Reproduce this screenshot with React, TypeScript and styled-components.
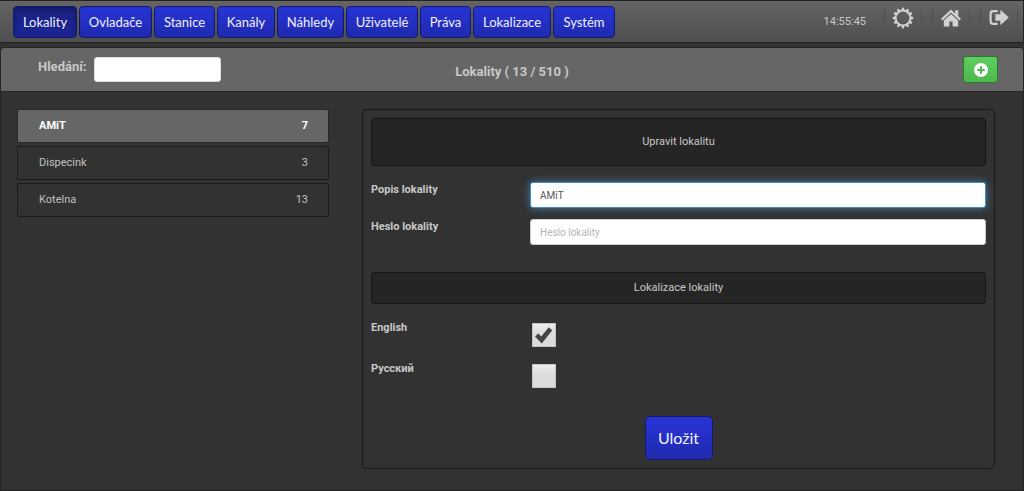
import React, { useState } from "react";
import styled, { createGlobalStyle } from "styled-components";

const BODY_FONT = `Roboto, "Noto Sans", sans-serif`;
const NAV_FONT = `Lato, "Open Sans", sans-serif`;

const GlobalStyle = createGlobalStyle`
  * { box-sizing: border-box; }
  body {
    margin: 0;
    background: #323232;
    color: #c8c8c8;
    font: 11px/16px ${BODY_FONT};
  }
  button, input { font: inherit; margin: 0; }
`;

const Page = styled.div`
  min-height: 100vh;
  display: flex;
  flex-direction: column;
`;

const Header = styled.header`
  height: 43px;
  flex: none;
  display: flex;
  align-items: center;
  justify-content: space-between;
  padding: 0 0 0 13px;
  background: linear-gradient(#646464, #4f4f4f);
  border: solid #222;
  border-width: 1px 1px 1px 0;
`;

const Nav = styled.nav`
  display: flex;
  gap: 2px;
`;

const NavButton = styled.button<{ $width: number; $active?: boolean }>`
  width: ${(p) => p.$width}px;
  height: 32px;
  padding: 0;
  border: 1px solid #141a6a;
  border-radius: 4px;
  background: ${(p) =>
    p.$active ? "linear-gradient(#1a2080, #1c2596)" : "linear-gradient(#2834d6, #1f2aae)"};
  box-shadow: ${(p) => (p.$active ? "inset 0 2px 4px rgba(0, 0, 0, 0.25)" : "none")};
  color: #f0f0ff;
  font: 13px/20px ${NAV_FONT};
  cursor: pointer;
`;

const Tools = styled.div`
  display: flex;
  align-items: center;
`;

const Clock = styled.time`
  margin-right: 13px;
  font-size: 11px;
`;

const IconButton = styled.button`
  width: 48px;
  height: 32px;
  padding: 0 0 8px;
  display: flex;
  justify-content: center;
  align-items: center;
  border: 0;
  background: none;
  color: #d2d2d2;
  cursor: pointer;
`;

const IconFrame = styled.span`
  width: 38px;
  height: 18px;
  display: flex;
  justify-content: center;
  align-items: center;
  border: solid #4e4e4e;
  border-width: 0 1px;
`;

const Toolbar = styled.section`
  height: 45px;
  flex: none;
  margin: 4px 0 0;
  padding: 0 25px;
  display: grid;
  grid-template-columns: 1fr auto 1fr;
  align-items: center;
  background: #666;
  border: 1px solid #262626;
  border-radius: 4px 4px 0 0;
`;

const Search = styled.label`
  display: flex;
  gap: 8px;
  padding-left: 12px;
  font-weight: 700;
  font-size: 13px;
  line-height: 20px;
`;

const SearchInput = styled.input`
  width: 127px;
  height: 25px;
  padding: 0 8px;
  border: 1px solid #ddd;
  border-radius: 3px;
  background: #fff;
`;

const Title = styled.h1`
  margin: 0;
  padding-top: 4px;
  font-size: 13px;
  line-height: 16px;
  font-weight: 700;
`;

const AddButton = styled.button`
  width: 35px;
  height: 27px;
  padding: 0;
  justify-self: end;
  display: flex;
  align-items: center;
  justify-content: center;
  border: 1px solid #2b7a2b;
  border-radius: 3px;
  background: linear-gradient(#5fce5f, #4cb84c);
  color: #fff;
  cursor: pointer;
`;

const Main = styled.main`
  flex: 1;
  display: grid;
  grid-template-columns: minmax(0, 312fr) minmax(0, 633fr);
  column-gap: 33px;
  align-items: start;
  padding: 17px 28px 21px 16px;
  border: solid #222;
  border-width: 0 1px 1px;
`;

const List = styled.ul`
  margin: 0;
  padding: 0;
  list-style: none;
  display: flex;
  flex-direction: column;
  gap: 3px;
`;

const ListButton = styled.button<{ $active?: boolean }>`
  width: 100%;
  height: 34px;
  padding: 0 20px 0 21px;
  display: flex;
  align-items: center;
  justify-content: space-between;
  border: 1px solid ${(p) => (p.$active ? "#282828" : "#1b1b1b")};
  border-radius: 2px;
  background: ${(p) => (p.$active ? "#666" : "transparent")};
  color: ${(p) => (p.$active ? "#fff" : "#c0c0c0")};
  font-weight: ${(p) => (p.$active ? 700 : 400)};
  cursor: pointer;
`;

const Panel = styled.form`
  min-height: 360px;
  padding: 8px;
  border: 1px solid #1a1a1a;
  border-radius: 4px;
`;

const Banner = styled.h2<{ $tall?: boolean }>`
  height: ${(p) => (p.$tall ? 48 : 32)}px;
  margin: 0;
  display: flex;
  align-items: center;
  justify-content: center;
  background: #252525;
  border: 1px solid #161616;
  border-radius: 3px;
  font-size: 11px;
  font-weight: 400;
`;

const Fields = styled.div<{ $gap: number }>`
  display: flex;
  flex-direction: column;
  gap: ${(p) => p.$gap}px;
  padding: 16px 0 27px;
`;

const Field = styled.div`
  display: grid;
  grid-template-columns: minmax(0, 159fr) minmax(0, 456fr);
  align-items: start;
`;

const FieldLabel = styled.label`
  font-weight: 700;
`;

const TextInput = styled.input`
  width: 100%;
  height: 26px;
  padding: 0 9px;
  border: 1px solid #ccc;
  border-radius: 3px;
  background: #fff;
  color: #555;
  font-size: 10px;
  outline: none;
  &::placeholder { color: #b4b4b4; }
  &:focus {
    border-color: #3d8fc4;
    box-shadow: 0 0 8px rgba(82, 168, 236, 0.6);
  }
`;

const CheckInput = styled.input`
  appearance: none;
  width: 24px;
  height: 24px;
  margin: 3px 0 0 2px;
  border: 1px solid #c4c4c4;
  background: linear-gradient(#eee, #dcdcdc 40%);
`;

const CheckBox = styled.span`
  position: relative;
  height: 28px;
  svg {
    position: absolute;
    left: 5px;
    top: 7px;
    pointer-events: none;
  }
`;

const Actions = styled.div`
  display: flex;
  justify-content: center;
`;

const SaveButton = styled.button`
  width: 68px;
  height: 44px;
  padding: 0;
  border: 1px solid #141a6a;
  border-radius: 5px;
  background: linear-gradient(#2834d6, #1f2aae);
  color: #f0f0ff;
  font: 16px/24px ${NAV_FONT};
  cursor: pointer;
`;

const GearIcon = () => (
  <svg width="22" height="22" viewBox="-11 -11 22 22" aria-hidden="true">
    <circle r="7.3" fill="none" stroke="currentColor" strokeWidth="1.8" />
    {Array.from({ length: 12 }, (_, i) => (
      <path key={i} d="M-1.9-7.6L-.7-10.4H.7L1.9-7.6z" fill="currentColor" transform={`rotate(${i * 30})`} />
    ))}
  </svg>
);

const HomeIcon = () => (
  <svg width="20" height="18" viewBox="0 0 20 18" fill="currentColor" aria-hidden="true">
    <path d="M10 .4L0 9.8l1.5 1.6L10 3.6l8.5 7.8L20 9.8l-2.8-2.6V1.2h-3v3.2z" />
    <path d="M10 5l-7.2 6.6V17.4h5.6v-5h3.2v5h5.6v-5.8z" />
  </svg>
);

const LogoutIcon = () => (
  <svg width="20" height="17" viewBox="0 0 20 17" aria-hidden="true">
    <path d="M8.6 2.1H4.2Q1.6 2.1 1.6 4.7v7.6Q1.6 14.9 4.2 14.9h4.4" fill="none" stroke="currentColor" strokeWidth="2.2" />
    <path d="M6.4 5.2h5V.8L19.8 8.5 11.4 16.2v-4.4h-5z" fill="currentColor" />
  </svg>
);

const PlusIcon = () => (
  <svg width="14" height="14" viewBox="0 0 14 14" aria-hidden="true">
    <circle cx="7" cy="7" r="7" fill="currentColor" />
    <path d="M7 3.2v7.6M3.2 7h7.6" stroke="#4fb94f" strokeWidth="2" />
  </svg>
);

const CheckIcon = () => (
  <svg width="18" height="17" viewBox="0 0 18 17" aria-hidden="true">
    <path d="M0 9.5l3.2-3 3.1 3L13.7.3l3.6 2.9L6.8 16.6z" fill="#444" />
  </svg>
);

const NAV_ITEMS: [string, number][] = [
  ["Lokality", 64],
  ["Ovladače", 73],
  ["Stanice", 61],
  ["Kanály", 58],
  ["Náhledy", 67],
  ["Uživatelé", 72],
  ["Práva", 51],
  ["Lokalizace", 78],
  ["Systém", 62],
];

const LOCATIONS: [string, number][] = [
  ["AMiT", 7],
  ["Dispecink", 3],
  ["Kotelna", 13],
];

const LanguageField = ({ id, name, initial }: { id: string; name: string; initial: boolean }) => {
  const [checked, setChecked] = useState(initial);
  return (
    <Field>
      <FieldLabel htmlFor={id}>{name}</FieldLabel>
      <CheckBox>
        <CheckInput id={id} type="checkbox" checked={checked} onChange={() => setChecked(!checked)} />
        {checked && <CheckIcon />}
      </CheckBox>
    </Field>
  );
};

export default function App() {
  const [active, setActive] = useState("AMiT");
  return (
    <Page>
      <GlobalStyle />
      <Header>
        <Nav>
          {NAV_ITEMS.map(([name, width], i) => (
            <NavButton key={name} type="button" $width={width} $active={i === 0}>
              {name}
            </NavButton>
          ))}
        </Nav>
        <Tools>
          <Clock>14:55:45</Clock>
          <IconButton type="button" aria-label="Nastavení"><IconFrame><GearIcon /></IconFrame></IconButton>
          <IconButton type="button" aria-label="Domů"><IconFrame><HomeIcon /></IconFrame></IconButton>
          <IconButton type="button" aria-label="Odhlásit"><IconFrame><LogoutIcon /></IconFrame></IconButton>
        </Tools>
      </Header>
      <Toolbar>
        <Search>
          Hledání:
          <SearchInput type="text" />
        </Search>
        <Title>Lokality ( 13 / 510 )</Title>
        <AddButton type="button" aria-label="Přidat"><PlusIcon /></AddButton>
      </Toolbar>
      <Main>
        <List>
          {LOCATIONS.map(([name, count]) => (
            <li key={name}>
              <ListButton type="button" $active={name === active} onClick={() => setActive(name)}>
                <span>{name}</span>
                <span>{count}</span>
              </ListButton>
            </li>
          ))}
        </List>
        <Panel onSubmit={(e) => e.preventDefault()}>
          <Banner $tall>Upravit lokalitu</Banner>
          <Fields $gap={11}>
            <Field>
              <FieldLabel htmlFor="description">Popis lokality</FieldLabel>
              <TextInput
                id="description"
                type="text"
                defaultValue="AMiT"
                autoFocus
                onFocus={(e) => e.currentTarget.setSelectionRange(0, 0)}
              />
            </Field>
            <Field>
              <FieldLabel htmlFor="password">Heslo lokality</FieldLabel>
              <TextInput id="password" type="text" placeholder="Heslo lokality" />
            </Field>
          </Fields>
          <Banner>Lokalizace lokality</Banner>
          <Fields $gap={13}>
            <LanguageField id="lang-en" name="English" initial />
            <LanguageField id="lang-ru" name="Русский" initial={false} />
          </Fields>
          <Actions>
            <SaveButton type="submit">Uložit</SaveButton>
          </Actions>
        </Panel>
      </Main>
    </Page>
  );
}
